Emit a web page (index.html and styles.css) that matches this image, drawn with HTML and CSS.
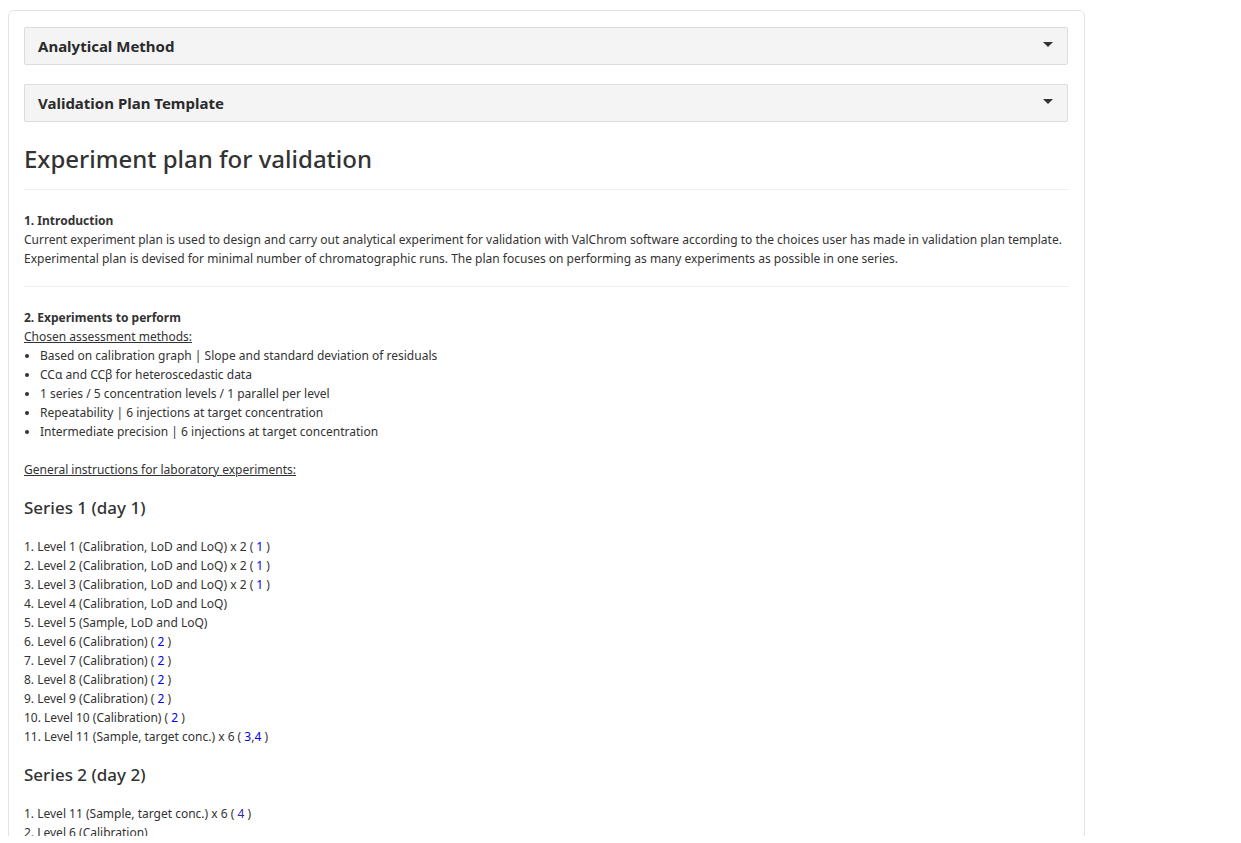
FILE: index.html
```html
<!DOCTYPE html>
<html>
<head>
<meta charset="utf-8">
<link rel="stylesheet" href="styles.css">
</head>
<body>
<div class="viewport">
<div class="card">
  <div class="panel"><span class="panel-title">Analytical Method</span><span class="caret"></span></div>
  <div class="panel second"><span class="panel-title">Validation Plan Template</span><span class="caret"></span></div>
  <h2 class="title">Experiment plan for validation</h2>
  <hr class="rule">
  <div class="section">
    <div class="sec-title">1. Introduction</div>
    <div>Current experiment plan is used to design and carry out analytical experiment for validation with ValChrom software according to the choices user has made in validation plan template.</div>
    <div>Experimental plan is devised for minimal number of chromatographic runs. The plan focuses on performing as many experiments as possible in one series.</div>
  </div>
  <hr class="rule mid">
  <div class="section">
    <div class="sec-title">2. Experiments to perform</div>
    <div class="u">Chosen assessment methods:</div>
    <ul class="methods">
      <li>Based on calibration graph | Slope and standard deviation of residuals</li>
      <li>CCα and CCβ for heteroscedastic data</li>
      <li>1 series / 5 concentration levels / 1 parallel per level</li>
      <li>Repeatability | 6 injections at target concentration</li>
      <li>Intermediate precision | 6 injections at target concentration</li>
    </ul>
    <div class="u">General instructions for laboratory experiments:</div>
    <h3 class="series">Series 1 (day 1)</h3>
    <div class="items">
      <div>1. Level 1 (Calibration, LoD and LoQ) x 2 ( <a>1</a> )</div>
      <div>2. Level 2 (Calibration, LoD and LoQ) x 2 ( <a>1</a> )</div>
      <div>3. Level 3 (Calibration, LoD and LoQ) x 2 ( <a>1</a> )</div>
      <div>4. Level 4 (Calibration, LoD and LoQ)</div>
      <div>5. Level 5 (Sample, LoD and LoQ)</div>
      <div>6. Level 6 (Calibration) ( <a>2</a> )</div>
      <div>7. Level 7 (Calibration) ( <a>2</a> )</div>
      <div>8. Level 8 (Calibration) ( <a>2</a> )</div>
      <div>9. Level 9 (Calibration) ( <a>2</a> )</div>
      <div>10. Level 10 (Calibration) ( <a>2</a> )</div>
      <div>11. Level 11 (Sample, target conc.) x 6 ( <a>3</a>,<a>4</a> )</div>
    </div>
    <h3 class="series">Series 2 (day 2)</h3>
    <div class="items">
      <div>1. Level 11 (Sample, target conc.) x 6 ( <a class="visited">4</a> )</div>
      <div>2. Level 6 (Calibration)</div>
    </div>
  </div>
</div>
</div>
</body>
</html>
```
FILE: styles.css
```css
html, body {
  margin: 0;
  padding: 0;
  background: #fff;
}
body {
  font-family: "Noto Sans", "Open Sans", sans-serif;
  font-size: 12px;
  line-height: 19px;
  color: #333;
}
.viewport {
  height: 836px;
  overflow: hidden;
}
.card {
  margin: 10px 0 0 8px;
  width: 1045px;
  padding: 16px 15px 40px 15px;
  border: 1px solid #e3e3e3;
  border-radius: 6px;
  min-height: 900px;
}
.panel {
  height: 36px;
  margin-right: 1px;
  background: #f4f4f4;
  border: 1px solid #dcdcdc;
  border-radius: 2px;
  display: flex;
  align-items: center;
  justify-content: space-between;
  padding: 0 14px 0 13px;
}
.panel.second { margin-top: 19px; }
.panel-title {
  font-weight: bold;
  font-size: 15px;
  color: #2b2b2b;
}
.caret {
  width: 0;
  height: 0;
  border-left: 5px solid transparent;
  border-right: 5px solid transparent;
  border-top: 5px solid #333;
  margin-top: -4px;
}
.title {
  font-size: 24px;
  font-weight: 500;
  line-height: 29px;
  margin: 22px 0 0 0;
  color: #333;
}
.rule {
  border: 0;
  border-top: 1px solid #eee;
  margin: 16px 0 21px 0;
}
.rule.mid { margin: 18px 0 21px 0; }
.sec-title { font-weight: bold; }
.u { text-decoration: underline; }
.methods {
  margin: 0 0 19px 0;
  padding-left: 16px;
}
.series {
  font-size: 17px;
  font-weight: 500;
  line-height: 20px;
  margin: 19px 0 19px 0;
}
.items a { color: #0000ee; }
.items a.visited { color: #3322aa; }
```
